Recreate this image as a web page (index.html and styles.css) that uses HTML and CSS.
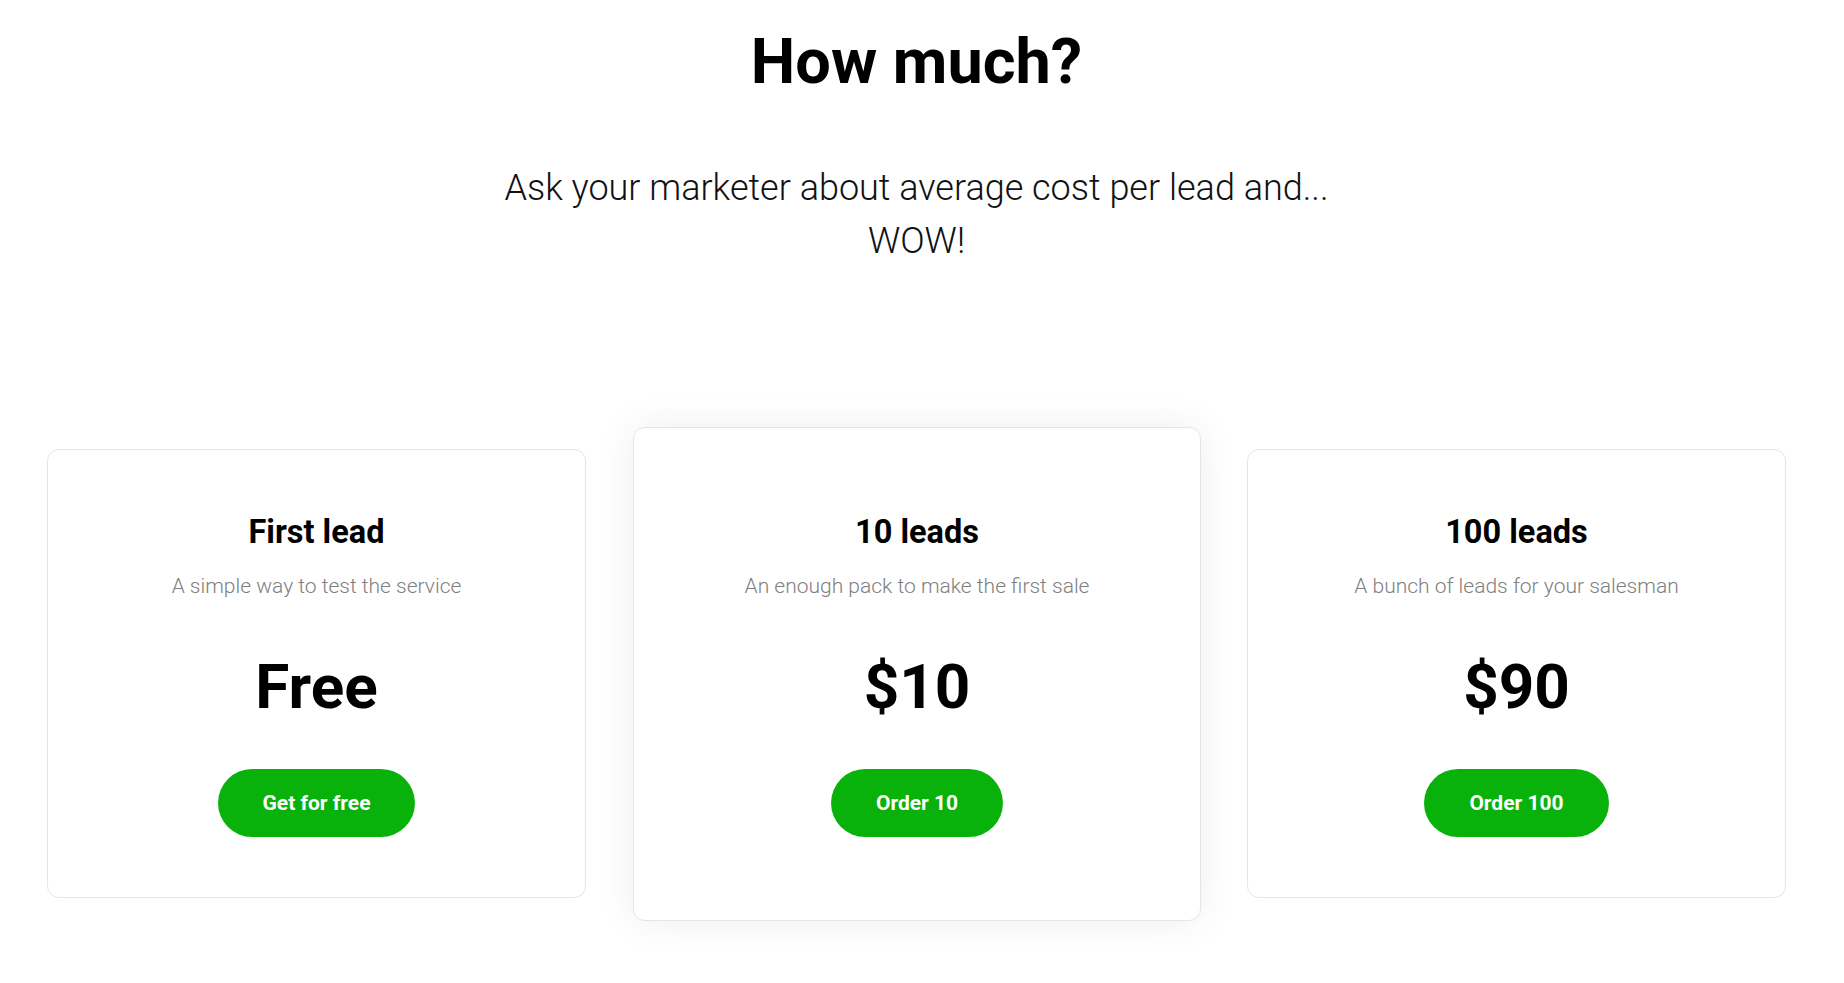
FILE: index.html
```html
<!DOCTYPE html>
<html lang="en">
<head>
<meta charset="utf-8">
<title>How much?</title>
<link rel="stylesheet" href="styles.css">
</head>
<body>
<main class="page">
  <header class="intro">
    <h1 class="intro-title">How much?</h1>
    <p class="intro-text">Ask your marketer about average cost per lead and...<br>WOW!</p>
  </header>
  <section class="plans">
    <article class="plan">
      <h2 class="plan-name">First lead</h2>
      <p class="plan-desc">A simple way to test the service</p>
      <div class="plan-price">Free</div>
      <a class="plan-btn" href="#">Get for free</a>
    </article>
    <article class="plan plan-featured">
      <h2 class="plan-name">10 leads</h2>
      <p class="plan-desc">An enough pack to make the first sale</p>
      <div class="plan-price">$10</div>
      <a class="plan-btn" href="#">Order 10</a>
    </article>
    <article class="plan">
      <h2 class="plan-name">100 leads</h2>
      <p class="plan-desc">A bunch of leads for your salesman</p>
      <div class="plan-price">$90</div>
      <a class="plan-btn" href="#">Order 100</a>
    </article>
  </section>
</main>
</body>
</html>
```

FILE: styles.css
```css
* { box-sizing: border-box; }

html, body {
  margin: 0;
  padding: 0;
  background: #ffffff;
}

body {
  font-family: Roboto, "Liberation Sans", Arial, sans-serif;
  color: #000;
}

.page {
  width: 1833px;
  padding: 24px 47px 60px;
}

.intro {
  text-align: center;
}

.intro-title {
  margin: 0;
  font-size: 63px;
  line-height: 1.2;
  font-weight: 700;
  color: #000;
}

.intro-text {
  margin: 62px 0 0;
  font-size: 36px;
  line-height: 53px;
  font-weight: 300;
  color: #111;
}

.plans {
  margin-top: 181px;
  display: grid;
  grid-template-columns: repeat(3, 539px);
  column-gap: 61px;
  align-items: start;
}

.plan {
  background: #fff;
  border: 1px solid #e2e6ec;
  border-radius: 12px;
  padding: 63px 20px 60px;
  display: flex;
  flex-direction: column;
  align-items: center;
  text-align: center;
}

.plan-featured {
  margin: -22px -15px -23px -14px;
  padding: 85px 34px 83px;
  box-shadow: 0 0 40px rgba(0, 0, 0, 0.07);
}

.plan-name {
  margin: 0;
  font-size: 32.5px;
  line-height: 38.4px;
  font-weight: 700;
  color: #000;
}

.plan-desc {
  margin: 20px 0 0;
  font-size: 21px;
  line-height: 31.5px;
  font-weight: 300;
  color: #808080;
}

.plan-price {
  margin-top: 47px;
  font-size: 62px;
  line-height: 74.4px;
  font-weight: 700;
  color: #000;
}

.plan-btn {
  margin-top: 45px;
  display: inline-flex;
  align-items: center;
  justify-content: center;
  height: 68px;
  padding: 0 45px;
  border-radius: 34px;
  background: #08b20b;
  color: #fff;
  font-size: 21px;
  font-weight: 700;
  text-decoration: none;
}
```
